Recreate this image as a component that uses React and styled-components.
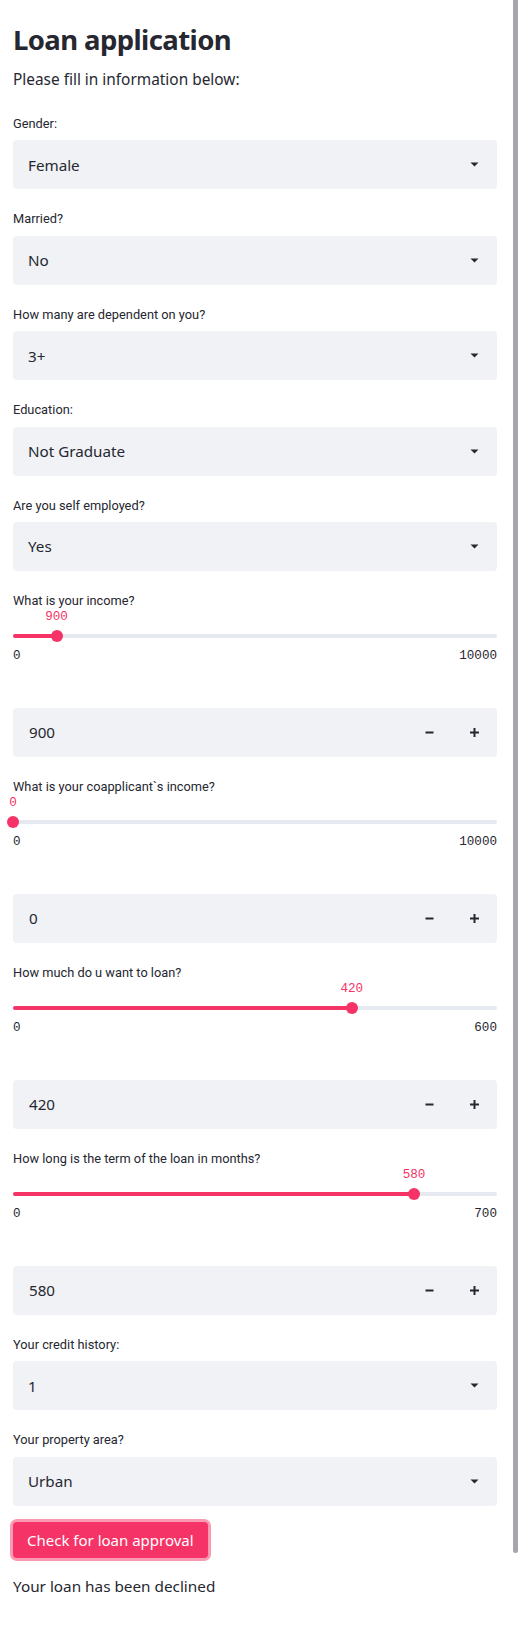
import React from "react";
import styled, { createGlobalStyle } from "styled-components";

const PRIMARY = "#f63366";
const TEXT = "#262730";
const FIELD_BG = "#f0f2f6";
const TRACK = "#e6e9ef";

const GlobalStyle = createGlobalStyle`
  html, body { margin: 0; padding: 0; background: #ffffff; }
  body {
    font-family: "Noto Sans", "Open Sans", sans-serif;
    color: ${TEXT};
  }
  * { box-sizing: border-box; }
`;

const Page = styled.main`
  width: 518px;
  padding: 0 21px 40px 13px;
  display: flex;
  flex-direction: column;
`;

const Title = styled.h1`
  margin: 22px 0 0;
  font-size: 27.5px;
  line-height: 36px;
  font-weight: 700;
  letter-spacing: -0.6px;
`;

const Subtitle = styled.p`
  margin: 10px 0 0;
  font-size: 15.4px;
  line-height: 24px;
`;

const Form = styled.div`
  margin-top: 22px;
  display: flex;
  flex-direction: column;
  gap: 20px;
`;

const Field = styled.div`
  display: flex;
  flex-direction: column;
`;

const Label = styled.label`
  font-family: Roboto, "Liberation Sans", sans-serif;
  font-size: 12.8px;
  line-height: 20px;
  margin-bottom: ${(p) => (p.$tight ? "0" : "6.4px")};
`;

const Box = styled.div`
  height: 49px;
  background: ${FIELD_BG};
  border-radius: 4px;
  display: flex;
  align-items: center;
  font-size: 15.2px;
`;

const SelectBox = styled(Box)`
  justify-content: space-between;
  padding: 0 18px 0 15px;
`;

const NumberBox = styled(Box)`
  padding-left: 16px;
`;

const NumberValue = styled.span`
  flex: 1;
`;

const StepButton = styled.span`
  width: 45px;
  height: 100%;
  display: flex;
  align-items: center;
  justify-content: center;
`;

const SliderWrap = styled.div`
  height: 77px;
  display: flex;
  flex-direction: column;
`;

const Mono = styled.span`
  font-family: "Liberation Mono", "DejaVu Sans Mono", monospace;
  font-size: 12.6px;
  line-height: 12px;
`;

const ValueRow = styled.div`
  position: relative;
  height: 12px;
`;

const ValueLabel = styled(Mono)`
  position: absolute;
  top: 0;
  transform: translateX(-50%);
  color: ${PRIMARY};
`;

const TrackRow = styled.div`
  position: relative;
  height: 12px;
  margin-top: 7px;
  display: flex;
  align-items: center;
`;

const Track = styled.div`
  width: 100%;
  height: 4px;
  border-radius: 2px;
  background: ${TRACK};
  overflow: hidden;
`;

const Fill = styled.div`
  height: 100%;
  background: ${PRIMARY};
`;

const Thumb = styled.div`
  position: absolute;
  top: 0;
  width: 12px;
  height: 12px;
  margin-left: -6px;
  border-radius: 50%;
  background: ${PRIMARY};
`;

const TicksRow = styled.div`
  margin-top: 8px;
  display: flex;
  justify-content: space-between;
  line-height: 14px;
`;

const Actions = styled.div`
  margin-top: 16px;
  display: flex;
  flex-direction: column;
  align-items: flex-start;
  gap: 16px;
`;

const PrimaryButton = styled.button`
  height: 36px;
  padding: 0 14px;
  border: none;
  border-radius: 4px;
  background: ${PRIMARY};
  color: #ffffff;
  font-family: "Noto Sans", "Open Sans", sans-serif;
  font-size: 15px;
  box-shadow: 0 0 0 3px rgba(246, 51, 102, 0.5);
  cursor: pointer;
`;

const Result = styled.p`
  margin: 0;
  font-size: 15.3px;
  line-height: 24px;
`;

const ScrollThumb = styled.div`
  position: fixed;
  top: 0;
  right: 0;
  width: 5px;
  height: 1553px;
  background: #a6a7aa;
  border-radius: 0 0 3px 3px;
`;

const Caret = () => (
  <svg width="9" height="5" viewBox="0 0 9 5">
    <path d="M0.5 0.5h8L4.5 4.5z" fill={TEXT} />
  </svg>
);

const Minus = () => (
  <svg width="9" height="9" viewBox="0 0 9 9">
    <rect x="0.5" y="3.5" width="8" height="2" fill={TEXT} />
  </svg>
);

const Plus = () => (
  <svg width="9" height="9" viewBox="0 0 9 9">
    <rect x="0" y="3.5" width="9" height="2" fill={TEXT} />
    <rect x="3.5" y="0" width="2" height="9" fill={TEXT} />
  </svg>
);

function SelectField({ label, value }) {
  return (
    <Field>
      <Label>{label}</Label>
      <SelectBox>
        <span>{value}</span>
        <Caret />
      </SelectBox>
    </Field>
  );
}

function SliderField({ label, value, max }) {
  const pct = (value / max) * 100;
  return (
    <>
      <Field>
        <Label $tight>{label}</Label>
        <SliderWrap>
          <ValueRow>
            <ValueLabel style={{ left: `${pct}%` }}>{value}</ValueLabel>
          </ValueRow>
          <TrackRow>
            <Track>
              <Fill style={{ width: `${pct}%` }} />
            </Track>
            <Thumb style={{ left: `${pct}%` }} />
          </TrackRow>
          <TicksRow>
            <Mono>0</Mono>
            <Mono>{max}</Mono>
          </TicksRow>
        </SliderWrap>
      </Field>
      <NumberBox>
        <NumberValue>{value}</NumberValue>
        <StepButton>
          <Minus />
        </StepButton>
        <StepButton>
          <Plus />
        </StepButton>
      </NumberBox>
    </>
  );
}

const selects = [
  { label: "Gender:", value: "Female" },
  { label: "Married?", value: "No" },
  { label: "How many are dependent on you?", value: "3+" },
  { label: "Education:", value: "Not Graduate" },
  { label: "Are you self employed?", value: "Yes" },
];

const sliders = [
  { label: "What is your income?", value: 900, max: 10000 },
  { label: "What is your coapplicant`s income?", value: 0, max: 10000 },
  { label: "How much do u want to loan?", value: 420, max: 600 },
  { label: "How long is the term of the loan in months?", value: 580, max: 700 },
];

export default function App() {
  return (
    <>
      <GlobalStyle />
      <Page>
        <Title>Loan application</Title>
        <Subtitle>Please fill in information below:</Subtitle>
        <Form>
          {selects.map((s) => (
            <SelectField key={s.label} {...s} />
          ))}
          {sliders.map((s) => (
            <SliderField key={s.label} {...s} />
          ))}
          <SelectField label="Your credit history:" value="1" />
          <SelectField label="Your property area?" value="Urban" />
        </Form>
        <Actions>
          <PrimaryButton>Check for loan approval</PrimaryButton>
          <Result>Your loan has been declined</Result>
        </Actions>
      </Page>
      <ScrollThumb />
    </>
  );
}
